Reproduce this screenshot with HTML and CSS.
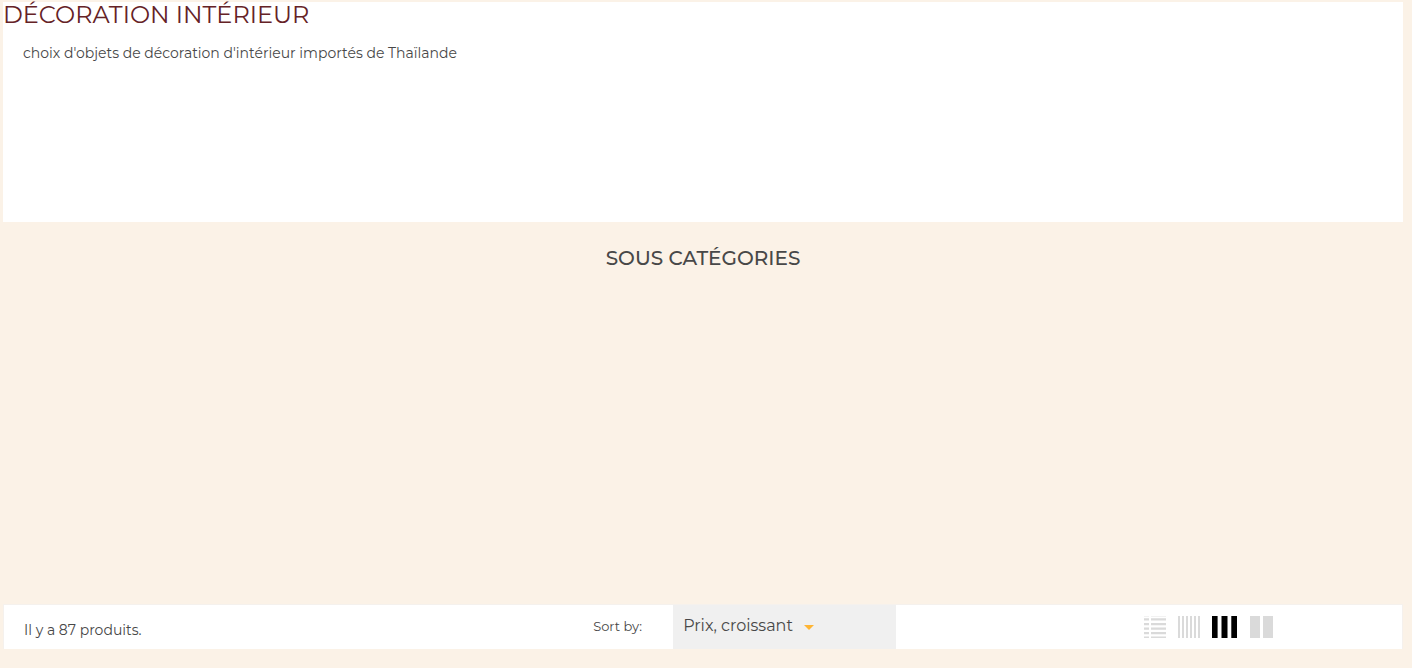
FILE: index.html
```html
<!DOCTYPE html>
<html lang="fr">
<head>
  <meta charset="UTF-8">
  <title>Décoration intérieur</title>
  <link rel="stylesheet" href="styles.css">
</head>
<body>
  <main>
    <!-- Category header -->
    <section class="category">
      <h1>DÉCORATION INTÉRIEUR</h1>
      <p>choix d'objets de décoration d'intérieur importés de Thaïlande</p>
    </section>

    <!-- Subcategories -->
    <section class="subcategories">
      <h2>SOUS CATÉGORIES</h2>
    </section>

    <!-- Product list toolbar -->
    <div class="toolbar">
      <p class="total">Il y a 87 produits.</p>
      <div class="sort">
        <label for="sortOrder">Sort by:</label>
        <div class="select-box">
          <select id="sortOrder">
            <option>Prix, croissant</option>
          </select>
          <svg class="arrow" width="10" height="5" viewBox="0 0 10 5"><path d="M0 0h10L5 5z"/></svg>
        </div>
      </div>
      <div class="views">
        <button type="button" class="view-list" aria-label="Liste">
          <svg width="22" height="22" viewBox="0 0 22 22">
            <path class="faint" d="M0 0h5v1H0zM7 0h15v1H7z"/>
            <path d="M0 2.3h5v2.2H0zM7 2.3h15v2.2H7zM0 7h5v2.2H0zM7 7h15v2.2H7zM0 11.5h5v2.2H0zM7 11.5h15v2.2H7zM0 16h5v2.2H0zM7 16h15v2.2H7zM0 20.5h5V22H0zM7 20.5h15V22H7z"/>
          </svg>
        </button>
        <button type="button" class="view-six" aria-label="6 colonnes">
          <svg width="22" height="22" viewBox="0 0 22 22"><path d="M0 0h2v22H0zM4 0h2v22H4zM8 0h2v22H8zM12 0h2v22h-2zM16 0h2v22h-2zM20 0h2v22h-2z"/></svg>
        </button>
        <button type="button" class="view-three active" aria-label="3 colonnes">
          <svg width="26" height="22" viewBox="0 0 26 22"><path d="M0 0h5.6v22H0zM9.5 0h6v22h-6zM19.3 0H25v22h-5.7z"/></svg>
        </button>
        <button type="button" class="view-two" aria-label="2 colonnes">
          <svg width="23" height="22" viewBox="0 0 23 22"><path d="M0 0h10v22H0zM13 0h10v22H13z"/></svg>
        </button>
      </div>
    </div>
  </main>
</body>
</html>
```

FILE: styles.css
```css
body { margin: 0; padding: 2px 9px 0 3px; background: #fbf2e7; color: #484848; font-family: Montserrat, Inter, sans-serif; font-size: 14px; }
h1, h2, p { margin: 0; }
.category { min-height: 220px; background: #fff; }
.category h1 { color: #652226; font-size: 24px; line-height: 26px; font-weight: 400; }
.category p { padding: 15px 20px 0; line-height: 20px; }
.subcategories { min-height: 358px; padding-top: 24px; box-sizing: border-box; margin-bottom: 25px; text-align: center; }
.subcategories h2 { font-size: 20px; line-height: 24px; font-weight: 500; }
.toolbar { display: flex; min-height: 44px; margin: 0 1px; background: #fff; box-shadow: 0 0 0 1px #f5f1ed; }
.total { width: 42%; padding: 15px 20px 9px; box-sizing: border-box; line-height: 20px; }
.sort { display: flex; flex: 1; }
.sort label { width: 80px; padding: 11px 0 0 2px; line-height: 20px; font-size: 13px; }
.select-box { position: relative; width: 223px; background: #f0f0f0; }
.select-box select { width: 100%; height: 40px; padding: 0 10px; border: 0; background: none; color: #484848; font-family: inherit; font-size: 16px; appearance: none; }
.arrow { position: absolute; left: 131px; top: 20px; fill: #ffb534; pointer-events: none; }
.views { display: flex; align-items: center; gap: 12px; padding-right: 129px; }
.views button { display: flex; padding: 0; border: 0; background: none; cursor: pointer; }
.views svg { fill: #dadada; }
.views .faint { fill: #f2f2f2; }
.views .active svg { fill: #000; }
```
